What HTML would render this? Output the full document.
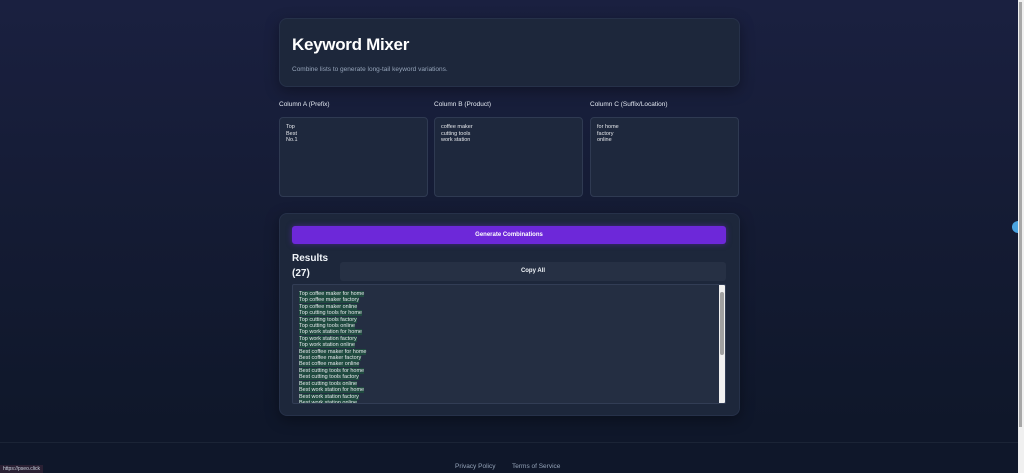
<!DOCTYPE html>
<html><head><meta charset="utf-8"><style>
*{box-sizing:border-box;margin:0;padding:0}
html,body{width:1024px;height:473px;overflow:hidden}
body{font-family:"Liberation Sans",sans-serif;background:#141b33;position:relative;color:#e5e7eb}
.bg{position:absolute;inset:0;background:linear-gradient(180deg,#1a2040 0%,#141b33 50%,#0f172a 90%)}
.card{position:absolute;background:#1d273b;border:1px solid #263149;border-radius:8px;box-shadow:0 4px 14px rgba(0,0,0,.35)}
h1{position:absolute;left:12px;top:16px;font-size:17px;font-weight:700;color:#fff;letter-spacing:-0.3px}
.sub{position:absolute;left:12px;top:47px;font-size:6.5px;color:#94a3b8}
.lbl{position:absolute;top:101px;font-size:6.5px;color:#e2e8f0}
.ta{position:absolute;top:117px;width:149px;height:80px;background:#1e283d;border:1px solid #2f3a52;border-radius:4px;padding:6px 6px;font-size:5.5px;line-height:6.5px;color:#e5e7eb}
.btn{position:absolute;left:12px;top:12px;width:434px;height:18px;background:#6d28d9;border-radius:3px;font-size:6px;font-weight:700;color:#fff;text-align:center;line-height:18px;box-shadow:0 0 6px rgba(109,40,217,.5)}
.res{position:absolute;left:12px;top:37px;font-size:10px;font-weight:700;line-height:15px;color:#f1f5f9}
.copy{position:absolute;left:60px;top:48px;width:386px;height:19px;background:#263044;border-radius:3px;font-size:6px;font-weight:700;color:#f1f5f9;text-align:center;line-height:19px}
.out{position:absolute;left:12px;top:70px;width:434px;height:120px;background:#242e42;border:1px solid #323d55;border-radius:2px;overflow:hidden;padding:6px 6px;font-size:5.5px;line-height:6.4px;color:#e5e7eb}
.out span{background:#1f4a3f}
.sb{position:absolute;right:0;top:0;width:6px;height:119px;background:#f0f0f0}
.sb div{position:absolute;left:1px;top:7px;width:4px;height:63px;background:#a0a0a0;border-radius:2px}
.foot{position:absolute;top:442px;left:0;width:1018px;height:31px;border-top:1px solid #1b2436;background:#0f172a}
.fl{position:absolute;top:463px;font-size:6.5px;color:#94a3b8}
.psb{position:absolute;right:0;top:0;width:6px;height:473px;background:#f0f0f0}
.psb div{position:absolute;left:1px;top:2px;width:3px;height:425px;background:#a8a8a8}
</style></head><body>
<div class="bg"></div>
<div class="card" style="left:279px;top:18px;width:461px;height:69px">
<h1>Keyword Mixer</h1>
<div class="sub">Combine lists to generate long-tail keyword variations.</div>
</div>
<div class="lbl" style="left:279px">Column A (Prefix)</div>
<div class="lbl" style="left:434px">Column B (Product)</div>
<div class="lbl" style="left:590px">Column C (Suffix/Location)</div>
<div class="ta" style="left:279px">Top<br>Best<br>No.1</div>
<div class="ta" style="left:434px">coffee maker<br>cutting tools<br>work station</div>
<div class="ta" style="left:590px">for home<br>factory<br>online</div>
<div class="card" style="left:279px;top:213px;width:461px;height:203px">
<div class="btn">Generate Combinations</div>
<div class="res">Results<br>(27)</div>
<div class="copy">Copy All</div>
<div class="out">
<span>Top coffee maker for home</span><br><span>Top coffee maker factory</span><br><span>Top coffee maker online</span><br><span>Top cutting tools for home</span><br><span>Top cutting tools factory</span><br><span>Top cutting tools online</span><br><span>Top work station for home</span><br><span>Top work station factory</span><br><span>Top work station online</span><br><span>Best coffee maker for home</span><br><span>Best coffee maker factory</span><br><span>Best coffee maker online</span><br><span>Best cutting tools for home</span><br><span>Best cutting tools factory</span><br><span>Best cutting tools online</span><br><span>Best work station for home</span><br><span>Best work station factory</span><br><span>Best work station online</span>
<div class="sb"><div></div></div>
</div>
</div>
<div class="foot"></div>
<div class="fl" style="left:455px">Privacy Policy</div>
<div class="fl" style="left:512px">Terms of Service</div>
<div style="position:absolute;left:0;top:465px;height:8px;padding:0 3px;background:#2a2033;font-size:5px;line-height:8px;color:#cbd5e1">https://pseo.click</div>
<div style="position:absolute;left:1012px;top:221px;width:12px;height:12px;border-radius:50%;background:#4aa3e0"></div>
<div class="psb"><div></div></div>
</body></html>
